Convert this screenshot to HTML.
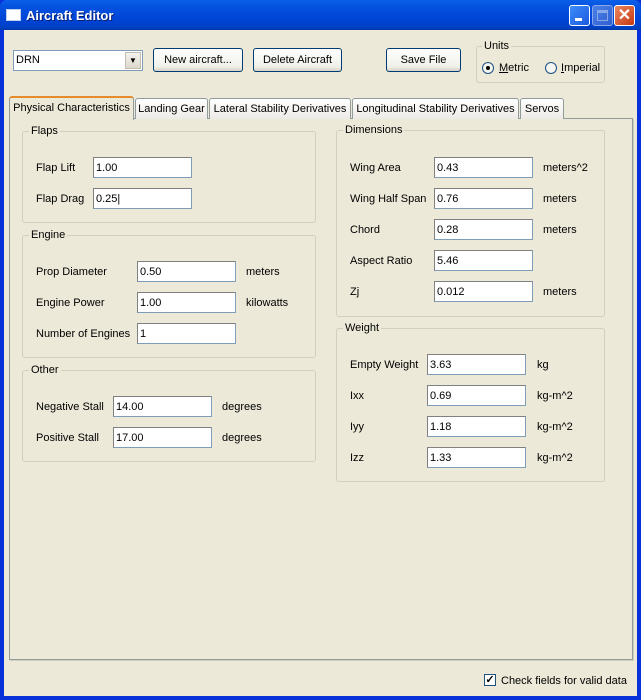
<!DOCTYPE html>
<html><head><style>
*{box-sizing:border-box;margin:0;padding:0}
body{width:641px;height:700px;position:relative;overflow:hidden;background:#0831d9;font-family:"Liberation Sans",Tahoma,sans-serif;font-size:11px;color:#000}
.a{position:absolute}
#title{left:0;top:0;width:641px;height:30px;background:linear-gradient(#0a5fe8,#0553e0 20%,#0045d8 60%,#0041c8 90%,#003aa8);border-radius:7px 7px 0 0}
#body{left:4px;top:30px;width:633px;height:666px;background:#ece9d8}
.btn{position:absolute;border:1px solid #003c74;border-radius:3px;background:linear-gradient(#fff,#f0f0ea 80%,#d6d0c5);text-align:center;line-height:23px;font-size:11px}
.grp{position:absolute;border:1px solid #d0d0bf;border-radius:3px}
.gl{position:absolute;background:#ece9d8;padding:0 2px;top:-7px;left:6px;line-height:12px}
.in{position:absolute;background:#fff;border:1px solid #7f9db9;border-top-color:#808080;border-left-color:#808080;height:21px;width:99px;padding-left:2px;line-height:21px}
.lb{position:absolute;line-height:12px}
.tab{position:absolute;top:98px;height:21px;border:1px solid #919b9c;border-bottom:none;border-radius:3px 3px 0 0;background:linear-gradient(#fff,#ecebe5);line-height:20px;text-align:center}
</style></head><body>
<div id="title" class="a"></div>
<div class="a" style="left:6px;top:9px;width:15px;height:12px;background:#fff;border:1px solid #c0d0f0"></div>
<div class="a" style="left:26px;top:8px;color:#fff;font-weight:bold;font-size:13px;text-shadow:1px 1px #0a1e6e">Aircraft Editor</div>
<div class="a" style="left:569px;top:5px;width:21px;height:21px;border:1px solid #fff;border-radius:3px;background:linear-gradient(135deg,#3c8cf8,#1c5ae0)"><div class="a" style="left:5px;top:12px;width:7px;height:3px;background:#fff"></div></div>
<div class="a" style="left:592px;top:5px;width:21px;height:21px;border:1px solid #8aa8e8;border-radius:3px;background:linear-gradient(135deg,#4a80e8,#3060d0)"><div class="a" style="left:4px;top:4px;width:11px;height:11px;border:1px solid #88a8e8;border-top-width:3px"></div></div>
<div class="a" style="left:614px;top:5px;width:21px;height:21px;border:1px solid #fff;border-radius:3px;background:linear-gradient(135deg,#e88860,#c83810);color:#fff;font-weight:bold;font-size:16px;line-height:19px;text-align:center">✕</div>
<div id="body" class="a"></div>

<div class="a" style="left:13px;top:50px;width:130px;height:21px;background:#fff;border:1px solid #7f9db9;padding:3px 2px">DRN</div>
<div class="a" style="left:125px;top:52px;width:16px;height:17px;background:linear-gradient(#f4f3ee,#dcd8cc);border:1px solid #c0beb4;font-size:8px;text-align:center;line-height:16px">▼</div>
<div class="btn" style="left:153px;top:48px;width:90px;height:24px">New aircraft...</div>
<div class="btn" style="left:253px;top:48px;width:89px;height:24px">Delete Aircraft</div>
<div class="btn" style="left:386px;top:48px;width:75px;height:24px">Save File</div>
<div class="grp" style="left:476px;top:46px;width:129px;height:37px"><span class="gl" style="left:5px">Units</span></div>
<div class="a" style="left:482px;top:62px;width:12px;height:12px;border-radius:50%;border:1px solid #1c5180;background:#f4f4f0"><div class="a" style="left:3px;top:3px;width:4px;height:4px;border-radius:50%;background:#000"></div></div>
<div class="lb" style="left:499px;top:62px"><u>M</u>etric</div>
<div class="a" style="left:545px;top:62px;width:12px;height:12px;border-radius:50%;border:1px solid #1c5180;background:#f4f4f0"></div>
<div class="lb" style="left:561px;top:62px"><u>I</u>mperial</div>

<div class="a" style="left:9px;top:118px;width:624px;height:542px;border:1px solid #919b9c;background:#ece9d8;box-shadow:1px 1px #d0d0bf"></div>
<div class="tab" style="left:135px;width:73px">Landing Gear</div>
<div class="tab" style="left:209px;width:142px">Lateral Stability Derivatives</div>
<div class="tab" style="left:352px;width:167px">Longitudinal Stability Derivatives</div>
<div class="tab" style="left:520px;width:44px">Servos</div>
<div class="tab" style="left:9px;top:96px;width:125px;height:24px;background:#ece9d8;border-top:2px solid #e68b2c;line-height:20px">Physical Characteristics</div>

<div class="grp" style="left:22px;top:131px;width:294px;height:92px"><span class="gl">Flaps</span></div>
<div class="lb" style="left:36px;top:162px">Flap Lift</div><div class="in" style="left:93px;top:157px">1.00</div>
<div class="lb" style="left:36px;top:193px">Flap Drag</div><div class="in" style="left:93px;top:188px">0.25|</div>

<div class="grp" style="left:22px;top:235px;width:294px;height:123px"><span class="gl">Engine</span></div>
<div class="lb" style="left:36px;top:266px">Prop Diameter</div><div class="in" style="left:137px;top:261px">0.50</div><div class="lb" style="left:246px;top:266px">meters</div>
<div class="lb" style="left:36px;top:297px">Engine Power</div><div class="in" style="left:137px;top:292px">1.00</div><div class="lb" style="left:246px;top:297px">kilowatts</div>
<div class="lb" style="left:36px;top:328px">Number of Engines</div><div class="in" style="left:137px;top:323px">1</div>

<div class="grp" style="left:22px;top:370px;width:294px;height:92px"><span class="gl">Other</span></div>
<div class="lb" style="left:36px;top:401px">Negative Stall</div><div class="in" style="left:113px;top:396px">14.00</div><div class="lb" style="left:222px;top:401px">degrees</div>
<div class="lb" style="left:36px;top:432px">Positive Stall</div><div class="in" style="left:113px;top:427px">17.00</div><div class="lb" style="left:222px;top:432px">degrees</div>

<div class="grp" style="left:336px;top:130px;width:269px;height:187px"><span class="gl">Dimensions</span></div>
<div class="lb" style="left:350px;top:162px">Wing Area</div><div class="in" style="left:434px;top:157px">0.43</div><div class="lb" style="left:543px;top:162px">meters^2</div>
<div class="lb" style="left:350px;top:193px">Wing Half Span</div><div class="in" style="left:434px;top:188px">0.76</div><div class="lb" style="left:543px;top:193px">meters</div>
<div class="lb" style="left:350px;top:224px">Chord</div><div class="in" style="left:434px;top:219px">0.28</div><div class="lb" style="left:543px;top:224px">meters</div>
<div class="lb" style="left:350px;top:255px">Aspect Ratio</div><div class="in" style="left:434px;top:250px">5.46</div>
<div class="lb" style="left:350px;top:286px">Zj</div><div class="in" style="left:434px;top:281px">0.012</div><div class="lb" style="left:543px;top:286px">meters</div>

<div class="grp" style="left:336px;top:328px;width:269px;height:154px"><span class="gl">Weight</span></div>
<div class="lb" style="left:350px;top:359px">Empty Weight</div><div class="in" style="left:427px;top:354px">3.63</div><div class="lb" style="left:537px;top:359px">kg</div>
<div class="lb" style="left:350px;top:390px">Ixx</div><div class="in" style="left:427px;top:385px">0.69</div><div class="lb" style="left:537px;top:390px">kg-m^2</div>
<div class="lb" style="left:350px;top:421px">Iyy</div><div class="in" style="left:427px;top:416px">1.18</div><div class="lb" style="left:537px;top:421px">kg-m^2</div>
<div class="lb" style="left:350px;top:452px">Izz</div><div class="in" style="left:427px;top:447px">1.33</div><div class="lb" style="left:537px;top:452px">kg-m^2</div>

<div class="a" style="left:484px;top:674px;width:12px;height:12px;border:1px solid #1c5180;background:#fff;font-size:11px;line-height:10px;text-align:center;font-weight:bold">✓</div>
<div class="lb" style="left:501px;top:675px">Check fields for valid data</div>
</body></html>
